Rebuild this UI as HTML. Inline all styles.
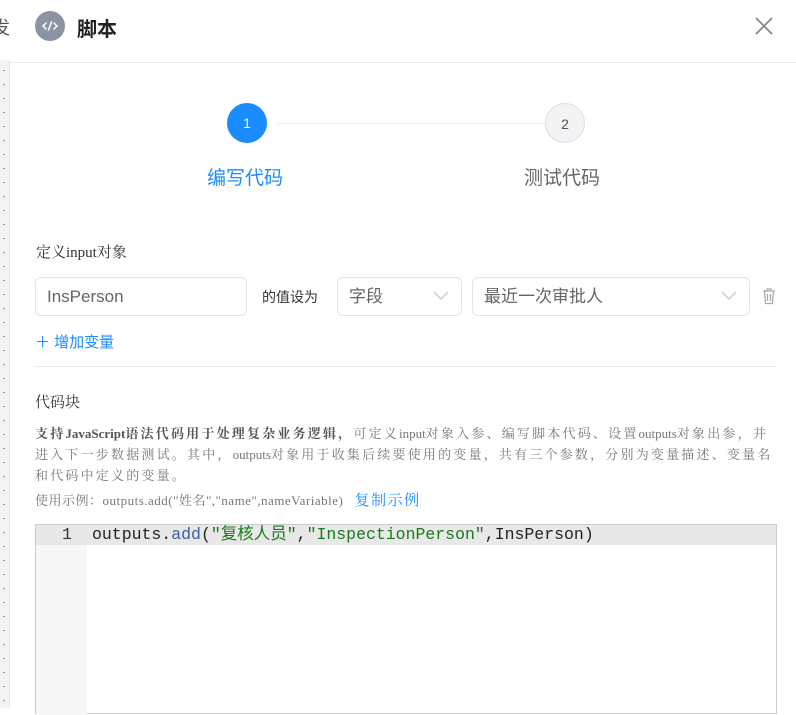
<!DOCTYPE html>
<html><head><meta charset="utf-8"><style>
*{box-sizing:border-box;margin:0;padding:0}
body{width:796px;height:708px;overflow:hidden;background:#fff;font-family:"Liberation Sans","Noto Sans CJK SC",sans-serif;position:relative}
.strip{position:absolute;left:0;top:0;width:10px;height:708px;background:#f3f4f6;border-right:1px solid #e5e6ea}
.strip .top{position:absolute;left:0;top:0;width:10px;height:60px;background:#fff;overflow:hidden}
.strip .top span{position:absolute;left:-8px;top:14px;font-size:18px;color:#555}
.dots{position:absolute;left:3px;top:70px;width:2px;height:640px;background:repeating-linear-gradient(#999 0 1px,transparent 1px 14px)}
.dlg{position:absolute;left:10px;top:0;right:0;bottom:0;background:#fff}
.hdr{height:63px;border-bottom:1px solid #ebedf0;position:relative}
.ico{position:absolute;left:25px;top:11px;width:30px;height:30px;border-radius:50%;background:#8b93a5}
.ttl{position:absolute;left:67px;top:13px;font-size:20px;font-weight:bold;color:#222}
.close{position:absolute;left:744px;top:16px}
.step{position:absolute;width:40px;height:40px;border-radius:50%;text-align:center;line-height:40px;font-size:14px}
.lbl{position:absolute;font-size:19px}
.abs{position:absolute}
.inp{position:absolute;top:277px;height:39px;border:1px solid #e3e4e7;border-radius:6px;font-size:17px;color:#666;line-height:37px;padding-left:11px}
.chev{position:absolute;right:12px;top:12px}
.l{letter-spacing:0}
</style></head><body>
<div class="strip"><div class="top"><span>发</span></div><div class="dots"></div></div>
<div class="dlg">
<div class="hdr">
<div class="ico"><svg width="30" height="30" viewBox="0 0 30 30"><path d="M11 12l-3 3 3 3M19 12l3 3-3 3M16.5 11l-3 8" stroke="#fff" stroke-width="1.5" fill="none" stroke-linecap="round"/></svg></div>
<div class="ttl">脚本</div>
<div class="close"><svg width="20" height="20"><path d="M2 2l16 16M18 2L2 18" stroke="#888" stroke-width="1.8"/></svg></div>
</div>
<div class="step" style="left:217px;top:103px;background:#1a8cff;color:#fff">1</div>
<div class="abs" style="left:267px;top:123px;width:268px;height:1px;background:#eceef1"></div>
<div class="step" style="left:535px;top:103px;background:#f2f3f5;border:1px solid #dcdfe4;color:#555">2</div>
<div class="lbl" style="left:197px;top:163px;color:#1a8cff">编写代码</div>
<div class="lbl" style="left:514px;top:163px;color:#666">测试代码</div>
<div class="abs" style="left:26px;top:241px;font-size:15px;color:#333;font-family:'Liberation Serif','Noto Serif CJK SC',serif">定义input对象</div>
<div class="inp" style="left:25px;width:212px">InsPerson</div>
<div class="abs" style="left:252px;top:287px;font-size:14px;color:#333">的值设为</div>
<div class="inp" style="left:327px;width:125px">字段<svg class="chev" width="16" height="12"><path d="M1 2l7 7 7-7" stroke="#ccc" stroke-width="1.5" fill="none"/></svg></div>
<div class="inp" style="left:462px;width:278px">最近一次审批人<svg class="chev" width="16" height="12"><path d="M1 2l7 7 7-7" stroke="#ccc" stroke-width="1.5" fill="none"/></svg></div>
<svg class="abs" style="left:752px;top:288px" width="14" height="17"><path d="M1 3h12M5 3V1h4v2M2.5 3.5l1 12h7l1-12M5.5 6v7M8.5 6v7" stroke="#aaa" stroke-width="1.3" fill="none"/></svg>
<div class="abs" style="left:25px;top:331px;font-size:15px;color:#1a8cff">＋ 增加变量</div>
<div class="abs" style="left:25px;top:366px;width:742px;height:1px;background:#e8e9ec"></div>
<div class="abs" style="left:25px;top:391px;font-size:15px;color:#333;font-family:'Liberation Serif','Noto Serif CJK SC',serif">代码块</div>
<div class="abs" style="left:25px;top:423px;width:742px;font-size:13px;line-height:21px;letter-spacing:2.2px;color:#777;font-family:'Liberation Serif','Noto Serif CJK SC',serif"><b style="color:#555">支持<span class="l">JavaScript</span>语法代码用于处理复杂业务逻辑，</b>可定义<span class="l">input</span>对象入参、编写脚本代码、设置<span class="l">outputs</span>对象出参，并进入下一步数据测试。其中，<span class="l">outputs</span>对象用于收集后续要使用的变量，共有三个参数，分别为变量描述、变量名和代码中定义的变量。</div>
<div class="abs" style="left:25px;top:490px;font-size:13px;line-height:21px;letter-spacing:0.5px;color:#777;font-family:'Liberation Serif','Noto Serif CJK SC',serif">使用示例：outputs.add("姓名","name",nameVariable) &nbsp; <span style="color:#1a8cff;font-size:15px;letter-spacing:1.5px">复制示例</span></div>
<div class="abs" style="left:25px;top:524px;width:742px;height:190px;border:1px solid #c9ccd1;background:#fff">
<div class="abs" style="left:0;top:0;width:51px;height:190px;background:#f7f7f7"></div>
<div class="abs" style="left:0;top:0;width:740px;height:20px;background:#e8e8e8"></div>
<div class="abs" style="left:26px;top:0;line-height:20px;font-family:'Liberation Mono','Noto Sans CJK SC',monospace;font-size:16.5px;color:#333">1</div>
<div class="abs" style="left:56px;top:0;line-height:20px;font-family:'Liberation Mono','Noto Sans CJK SC',monospace;font-size:16.5px;color:#222;white-space:pre">outputs.<span style="color:#3a5fa0">add</span>(<span style="color:#1a7a1a">"复核人员"</span>,<span style="color:#1a7a1a">"InspectionPerson"</span>,InsPerson)</div>
</div>
</div>
</body></html>
